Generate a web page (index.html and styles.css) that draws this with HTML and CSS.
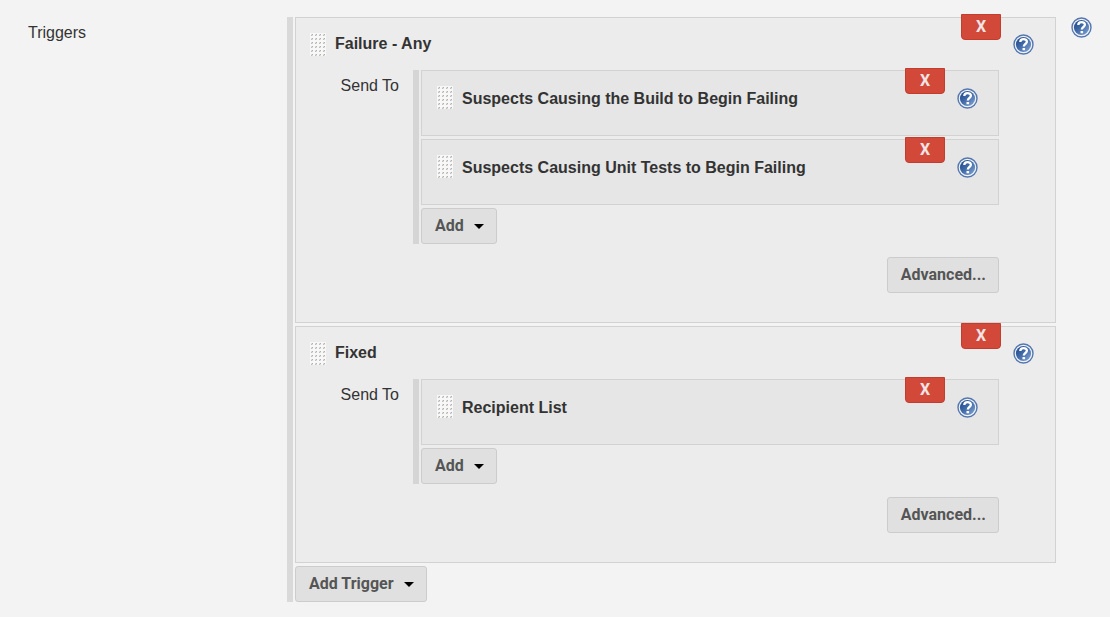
FILE: index.html
```
<!DOCTYPE html>
<html lang="en">
<head>
<meta charset="utf-8">
<title>Triggers</title>
<link rel="stylesheet" href="styles.css">
</head>
<body>
<svg class="defs" aria-hidden="true">
  <defs>
    <linearGradient id="blue" x1="0" y1="0" x2="1" y2="1">
      <stop offset="0" stop-color="#1d4586"/>
      <stop offset="0.45" stop-color="#3f68a6"/>
      <stop offset="1" stop-color="#86a8d6"/>
    </linearGradient>
    <pattern id="dots" x="1" y="1" width="4" height="4" patternUnits="userSpaceOnUse">
      <rect width="2" height="2" fill="#dddcda"/>
      <rect x="1" width="1" height="1" fill="#b3b2ae"/>
      <rect y="1" width="1" height="1" fill="#c0bfbc"/>
    </pattern>
    <symbol id="help" viewBox="0 0 21 21">
      <circle cx="10.5" cy="10.5" r="9.5" fill="#f0f4fa" stroke="#5577ae" stroke-width="1.4"/>
      <circle cx="10.5" cy="10.5" r="7.6" fill="url(#blue)"/>
      <path d="M7.3 8C7.3 4.2 13.9 4.2 13.9 7.8C13.9 10 10.8 10 10.8 12.5" fill="none" stroke="#fff" stroke-width="2.3"/>
      <rect x="9.5" y="13.9" width="2.6" height="2.4" rx=".6" fill="#fff"/>
    </symbol>
    <symbol id="grip" viewBox="0 0 16 23">
      <rect width="16" height="23" fill="#f8f8f8"/>
      <rect x="1" y="1" width="15" height="22" fill="url(#dots)"/>
    </symbol>
  </defs>
</svg>
<main class="row">
  <h1 class="label">Triggers</h1>
  <div class="list">
    <section class="card trigger">
      <button class="remove" type="button">X</button>
      <header class="head">
        <svg class="grip" aria-hidden="true"><use href="#grip"/></svg>
        <h2 class="title">Failure - Any</h2>
        <a class="help" href="#" aria-label="Help"><svg class="icon"><use href="#help"/></svg></a>
      </header>
      <div class="send">
        <span class="sendlabel">Send To</span>
        <div class="list inner">
          <article class="card recipient">
            <button class="remove" type="button">X</button>
            <svg class="grip" aria-hidden="true"><use href="#grip"/></svg>
            <h3 class="title">Suspects Causing the Build to Begin Failing</h3>
            <a class="help" href="#" aria-label="Help"><svg class="icon"><use href="#help"/></svg></a>
          </article>
          <article class="card recipient">
            <button class="remove" type="button">X</button>
            <svg class="grip" aria-hidden="true"><use href="#grip"/></svg>
            <h3 class="title">Suspects Causing Unit Tests to Begin Failing</h3>
            <a class="help" href="#" aria-label="Help"><svg class="icon"><use href="#help"/></svg></a>
          </article>
          <button class="button" type="button">Add<span class="caret"></span></button>
        </div>
      </div>
      <footer class="foot"><button class="button" type="button">Advanced...</button></footer>
    </section>
    <section class="card trigger">
      <button class="remove" type="button">X</button>
      <header class="head">
        <svg class="grip" aria-hidden="true"><use href="#grip"/></svg>
        <h2 class="title">Fixed</h2>
        <a class="help" href="#" aria-label="Help"><svg class="icon"><use href="#help"/></svg></a>
      </header>
      <div class="send">
        <span class="sendlabel">Send To</span>
        <div class="list inner">
          <article class="card recipient">
            <button class="remove" type="button">X</button>
            <svg class="grip" aria-hidden="true"><use href="#grip"/></svg>
            <h3 class="title">Recipient List</h3>
            <a class="help" href="#" aria-label="Help"><svg class="icon"><use href="#help"/></svg></a>
          </article>
          <button class="button" type="button">Add<span class="caret"></span></button>
        </div>
      </div>
      <footer class="foot"><button class="button" type="button">Advanced...</button></footer>
    </section>
    <button class="button" type="button">Add Trigger<span class="caret"></span></button>
  </div>
  <a class="help" href="#" aria-label="Help"><svg class="icon"><use href="#help"/></svg></a>
</main>
</body>
</html>
```
FILE: styles.css
```
* {
  box-sizing: border-box;
}

body {
  margin: 0;
  background: #f3f3f3;
  color: #333;
  font: 16px/20px "Liberation Sans", Arial, sans-serif;
}

.defs {
  position: absolute;
  width: 0;
  height: 0;
}

.row {
  display: grid;
  grid-template-columns: 259px 1fr 21px;
  align-items: start;
  padding: 17px 18px 15px 28px;
}

.label {
  margin: 0;
  padding-top: 6px;
  font-size: 16px;
  font-weight: 400;
}

.list {
  display: flex;
  flex-direction: column;
  align-items: flex-start;
  gap: 3px;
  border-left: 6px solid #d9d9d9;
  padding: 0 0 0 2px;
}

.row > .list {
  margin-right: 15px;
}

.inner {
  flex: 1;
  border-color: #d5d5d5;
}

.card {
  position: relative;
  align-self: stretch;
  border: 1px solid #d2d2d2;
}

.trigger {
  background: #ececec;
  padding: 0 0 29px;
}

.head {
  display: flex;
  align-items: center;
  height: 52px;
  padding: 0 21px 0 14px;
}

.recipient {
  display: flex;
  align-items: flex-start;
  height: 66px;
  padding: 17px 20px 0 15px;
  background: #e6e6e6;
}

.grip {
  flex: none;
  width: 16px;
  height: 23px;
}

.recipient .grip {
  margin-top: -2px;
}

.title {
  flex: 1;
  margin: 0 0 0 9px;
  font-size: 16px;
  line-height: 22px;
}

.help,
.icon {
  display: block;
  width: 21px;
  height: 21px;
}

.send {
  display: flex;
  align-items: flex-start;
  padding-right: 56px;
}

.sendlabel {
  flex: none;
  width: 117px;
  padding: 6px 14px 0 0;
  text-align: right;
}

.foot {
  display: flex;
  justify-content: flex-end;
  padding: 13px 56px 0 0;
}

.button {
  display: flex;
  align-items: center;
  gap: 10px;
  height: 36px;
  border: 1px solid #ccc;
  border-radius: 3px;
  padding: 0 12px 0 13px;
  background: #e0e0e0;
  color: #555;
  font: bold 16px/20px Roboto, Arial, sans-serif;
}

.caret {
  width: 10px;
  border: 5px solid transparent;
  border-top-color: #000;
  border-bottom: 0;
}

.remove {
  position: absolute;
  top: -4px;
  right: 54px;
  width: 40px;
  height: 26px;
  border: 1px solid #c43c2c;
  border-radius: 0 0 4px 4px;
  padding: 0;
  background: #d24939;
  color: #f0e4e4;
  font: bold 16px/20px Roboto, Arial, sans-serif;
}

.recipient .remove {
  top: -3px;
  right: 53px;
}
```
